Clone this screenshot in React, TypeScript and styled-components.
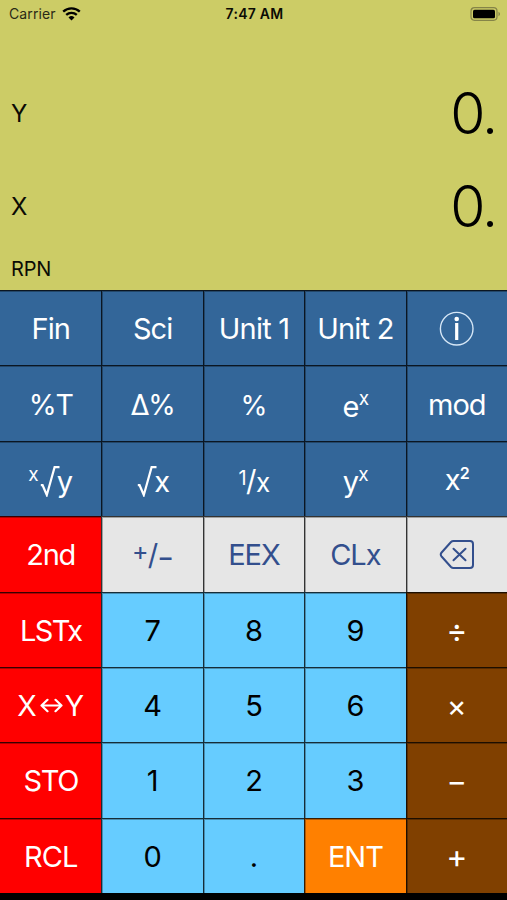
import React from "react";
import styled, { createGlobalStyle } from "styled-components";

const GlobalStyle = createGlobalStyle`
  * { box-sizing: border-box; }
  body { margin: 0; background: #000; }
`;

const Screen = styled.main`
  width: 507px;
  height: 900px;
  display: flex;
  flex-direction: column;
  overflow: hidden;
  background: #000;
  color: #0b0b04;
  font-family: Inter, "Liberation Sans", sans-serif;
`;

const Display = styled.section`
  height: 290px;
  display: flex;
  flex-direction: column;
  background: #cccc66;
`;

const StatusBar = styled.header`
  height: 27px;
  padding: 0 6px 0 9px;
  display: grid;
  grid-template-columns: 1fr auto 1fr;
  align-items: center;
  font-size: 14px;
  line-height: 27px;
`;

const Carrier = styled.div`
  display: flex;
  align-items: center;
  gap: 6px;
  letter-spacing: 0.1px;
  color: #2a2a16;
`;

const Clock = styled.div`
  font-weight: 600;
  letter-spacing: 0.25px;
  margin-right: 1px;
`;

const BatterySlot = styled.div`
  display: flex;
  justify-content: flex-end;
`;

const Register = styled.div`
  height: 93px;
  padding: 0 11px;
  display: flex;
  align-items: center;
  justify-content: space-between;

  &:first-of-type { margin-top: 40px; }
`;

const RegisterName = styled.span`
  font-size: 24px;
  letter-spacing: -0.5px;
`;

const RegisterValue = styled.output`
  margin-bottom: 1px;
  font-size: 57px;
  font-weight: 300;
  letter-spacing: -2px;
  color: #000;
`;

const Mode = styled.div`
  padding-left: 11px;
  margin-top: 3px;
  font-size: 20px;
  line-height: 26px;
  letter-spacing: -0.2px;
`;

const tones = {
  blue: { bg: "#336699", fg: "#ffffff" },
  red: { bg: "#ff0000", fg: "#ffffff" },
  grey: { bg: "#e6e6e6", fg: "#334f8d" },
  sky: { bg: "#66ccff", fg: "#000000" },
  brown: { bg: "#804000", fg: "#ffffff" },
  orange: { bg: "#ff8000", fg: "#ffffff" },
};
type Tone = keyof typeof tones;

const Keypad = styled.section`
  height: 603px;
  display: grid;
  grid-template-columns: repeat(5, 1fr);
  grid-template-rows: repeat(8, 1fr);
`;

const Key = styled.button<{ $tone: Tone; $first: boolean }>`
  min-width: 0;
  margin: 0;
  padding: 2px 0 0;
  border: 0 solid rgba(0, 0, 0, 0.78);
  border-top-width: 1px;
  border-left-width: ${(p) => (p.$first ? 0 : 1)}px;
  box-shadow: inset ${(p) => (p.$first ? 0 : 1)}px 1px 0 rgba(0, 0, 0, 0.3);
  display: flex;
  align-items: center;
  justify-content: center;
  background: ${(p) => tones[p.$tone].bg};
  color: ${(p) => tones[p.$tone].fg};
  font-family: inherit;
`;

const Label = styled.span<{ $spacing?: number; $size?: number; $drop?: number }>`
  display: inline-flex;
  align-items: baseline;
  font-size: ${(p) => p.$size ?? 29}px;
  font-weight: 400;
  line-height: 36px;
  letter-spacing: ${(p) => p.$spacing ?? 0}px;
  padding-top: ${(p) => p.$drop ?? 0}px;
  white-space: pre;
`;

const Raised = styled.span<{ $rise: number; $size?: number; $weight?: number }>`
  font-size: ${(p) => p.$size ?? 19}px;
  font-weight: ${(p) => p.$weight ?? 400};
  line-height: 1;
  transform: translateY(${(p) => -p.$rise}px);
`;

const RadicalSvg = styled.svg`
  margin: 0 -3px 0 1px;
  transform: translateY(5px);
`;

const ArrowSvg = styled.svg`
  margin: 0 2px 0 3px;
`;

const WifiIcon = () => (
  <svg width="19" height="14" viewBox="0 0 19 14" fill="none" stroke="#000" strokeWidth="2.3">
    <path d="M1.2 4.6C5.8.2 13.2.2 17.8 4.6" />
    <path d="M4.2 7.9c3-2.8 7.6-2.8 10.6 0" />
    <path d="M6.5 10.5a4.3 4.3 0 0 1 6 0l-3 3z" fill="#000" stroke="none" />
  </svg>
);

const BatteryIcon = () => (
  <svg width="31" height="14" viewBox="0 0 31 14">
    <rect x="1" y=".7" width="26" height="12.6" rx="3.5" fill="none" stroke="#858448" strokeWidth="1.2" />
    <rect x="3" y="2.7" width="22" height="8.6" rx="1.6" fill="#000" />
    <path d="M28.5 4.8c2 .8 2 3.6 0 4.4z" fill="#858448" />
  </svg>
);

const InfoIcon = () => (
  <svg width="36" height="36" viewBox="0 0 36 36" fill="none" stroke="#fff">
    <circle cx="17.7" cy="17.7" r="16.3" strokeWidth="1.4" stroke="#d5e6f6" />
    <path d="M17.7 12v17" strokeWidth="3.2" />
    <circle cx="17.7" cy="8" r="2.3" fill="#fff" stroke="none" />
  </svg>
);

const Radical = () => (
  <RadicalSvg width="20" height="32" viewBox="0 0 20 32" fill="none" stroke="currentColor" strokeWidth="2.2">
    <path d="M.8 20.2H2.6L6.8 30 14.6 2.2H19.5" />
  </RadicalSvg>
);

const SwapArrow = () => (
  <ArrowSvg width="23" height="20" viewBox="0 0 23 20" fill="none" stroke="currentColor" strokeWidth="2.2" strokeLinecap="round" strokeLinejoin="round">
    <path d="M1.5 9.5h20M7.5 3.8L1.5 9.5l6 5.7M15.5 3.8l6 5.7-6 5.7" />
  </ArrowSvg>
);

const BackspaceIcon = () => (
  <svg width="36" height="32" viewBox="0 0 36 32" fill="none" stroke="#334f8d" strokeWidth="2" strokeLinecap="round" strokeLinejoin="round">
    <path d="M14.5 2h16.5q3 0 3 3v21q0 3-3 3h-16.5q-1.5 0-2.5-1L2.6 17.5q-1.7-2 0-4L12 3q1-1 2.5-1z" />
    <path d="M14.5 9.7l12 11.6M26.5 9.7l-12 11.6" />
  </svg>
);

type KeySpec = { name: string; tone: Tone; face: React.ReactNode };

const plain = (name: string, tone: Tone, spacing = 0, size = 29): KeySpec => ({
  name,
  tone,
  face: <Label $spacing={spacing} $size={size}>{name}</Label>,
});

const keys: KeySpec[] = [
  plain("Fin", "blue", -1),
  plain("Sci", "blue", -1),
  plain("Unit 1", "blue", -0.8),
  plain("Unit 2", "blue", -0.8),
  { name: "Info", tone: "blue", face: <InfoIcon /> },

  plain("%T", "blue", -1.2, 28.5),
  plain("Δ%", "blue", -1.2, 28),
  plain("%", "blue", 0, 27.5),
  { name: "e to the x", tone: "blue", face: <Label $drop={4} $spacing={-0.8}>e<Raised $rise={12}>x</Raised></Label> },
  plain("mod", "blue", -1),

  { name: "x root of y", tone: "blue", face: <Label><Raised $rise={11}>x</Raised><Radical />y</Label> },
  { name: "square root", tone: "blue", face: <Label $spacing={-1}><Radical />x</Label> },
  { name: "reciprocal", tone: "blue", face: <Label $drop={2} $spacing={-0.6}><Raised $rise={6} $size={20}>1</Raised>/<Raised $rise={-1} $size={26}>x</Raised></Label> },
  { name: "y to the x", tone: "blue", face: <Label $drop={4} $spacing={-0.8}>y<Raised $rise={11}>x</Raised></Label> },
  { name: "x squared", tone: "blue", face: <Label $drop={1} $spacing={-0.8}>x<Raised $rise={11} $size={16} $weight={600}>2</Raised></Label> },

  plain("2nd", "red", -1.2),
  { name: "change sign", tone: "grey", face: <Label $spacing={-0.8}><Raised $rise={5} $size={25}>+</Raised>/<Raised $rise={-1} $size={25} $weight={500}>−</Raised></Label> },
  plain("EEX", "grey", -1),
  plain("CLx", "grey", -1),
  { name: "Backspace", tone: "grey", face: <BackspaceIcon /> },

  plain("LSTx", "red", -1.6),
  plain("7", "sky"),
  plain("8", "sky"),
  plain("9", "sky"),
  plain("÷", "brown", 0, 32),

  { name: "swap X and Y", tone: "red", face: <Label $size={28.5}>X<SwapArrow />Y</Label> },
  plain("4", "sky"),
  plain("5", "sky"),
  plain("6", "sky"),
  plain("×", "brown", 0, 30),

  plain("STO", "red", -1.4),
  plain("1", "sky"),
  plain("2", "sky"),
  plain("3", "sky"),
  plain("−", "brown", 0, 31),

  plain("RCL", "red", -1),
  plain("0", "sky"),
  plain(".", "sky"),
  plain("ENT", "orange", -1),
  plain("+", "brown", 0, 32),
];

export default function App() {
  return (
    <Screen>
      <GlobalStyle />
      <Display>
        <StatusBar>
          <Carrier>Carrier <WifiIcon /></Carrier>
          <Clock>7:47 AM</Clock>
          <BatterySlot><BatteryIcon /></BatterySlot>
        </StatusBar>
        <Register>
          <RegisterName>Y</RegisterName>
          <RegisterValue>0.</RegisterValue>
        </Register>
        <Register>
          <RegisterName>X</RegisterName>
          <RegisterValue>0.</RegisterValue>
        </Register>
        <Mode>RPN</Mode>
      </Display>
      <Keypad>
        {keys.map((key, i) => (
          <Key key={key.name} $tone={key.tone} $first={i % 5 === 0} aria-label={key.name}>
            {key.face}
          </Key>
        ))}
      </Keypad>
    </Screen>
  );
}
